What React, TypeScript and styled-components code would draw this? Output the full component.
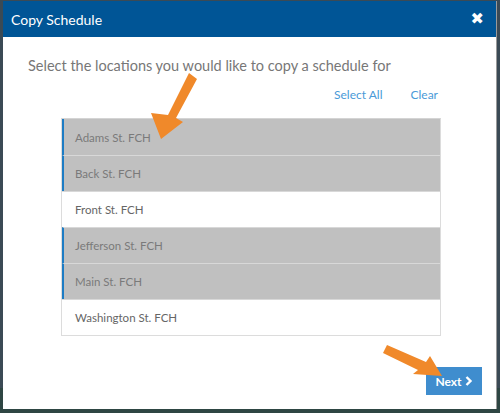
import React, { useState } from 'react'
import styled, { createGlobalStyle } from 'styled-components'

const GlobalStyle = createGlobalStyle`
    html, body {
        margin: 0;
        padding: 0;
        background: #34464a;
    }
    body {
        font-family: Lato, "Open Sans", sans-serif;
    }
`

const Backdrop = styled.div`
    width: 500px;
    height: 413px;
    box-sizing: border-box;
    padding: 1px 3px 4px 3px;
    background: linear-gradient(#3b4a55, #3b4a55 94%, #2e4643 94%);
`

const Modal = styled.div`
    position: relative;
    width: 493px;
    height: 408px;
    background: #ffffff;
    border-right: 1px solid #9a9a9a;
    display: flex;
    flex-direction: column;
`

const Header = styled.div`
    height: 36px;
    background: #005596;
    display: flex;
    align-items: center;
    justify-content: space-between;
    padding: 0 12px 0 8px;
    color: #ffffff;
`

const Title = styled.div`
    font-size: 14px;
`

const CloseButton = styled.span`
    font-size: 16px;
    font-weight: 900;
    line-height: 1;
    font-family: "DejaVu Sans", sans-serif;
`

const Body = styled.div`
    flex: 1;
    display: flex;
    flex-direction: column;
    padding: 20px 14px 14px 25px;
`

const Instruction = styled.div`
    font-size: 14.5px;
    line-height: 18px;
    color: #777777;
`

const LinkRow = styled.div`
    display: flex;
    justify-content: flex-end;
    gap: 28px;
    margin: 12px 44px 0 0;
    line-height: 16px;
`

const Link = styled.a`
    font-size: 12px;
    color: #4a9ad8;
    cursor: pointer;
`

const List = styled.div`
    margin: 15px 0 0 33px;
    width: 378px;
    border: 1px solid #dcdcdc;
    border-top-color: #d4d4d4;
`

const Row = styled.div<{ $selected: boolean }>`
    height: 36px;
    box-sizing: border-box;
    display: flex;
    align-items: center;
    padding-left: ${p => (p.$selected ? 11 : 13)}px;
    font-size: 11.5px;
    color: ${p => (p.$selected ? '#7a7a7a' : '#666666')};
    background: ${p => (p.$selected ? '#c0c0c0' : '#ffffff')};
    border-left: ${p => (p.$selected ? '2px solid #1d7cc4' : 'none')};
    & + & {
        border-top: 1px solid #d8d8d8;
    }
`

const Footer = styled.div`
    margin-top: auto;
    display: flex;
    justify-content: flex-end;
`

const NextButton = styled.button`
    width: 56px;
    height: 28px;
    background: #3f8dce;
    border: none;
    color: #ffffff;
    font-family: Lato, sans-serif;
    font-weight: 700;
    font-size: 12px;
    display: flex;
    align-items: center;
    justify-content: center;
    gap: 3px;
    padding: 0;
`

const Annotation = styled.svg`
    position: absolute;
    left: 0;
    top: 0;
    pointer-events: none;
`

const locations = [
    { name: 'Adams St. FCH', selected: true },
    { name: 'Back St. FCH', selected: true },
    { name: 'Front St. FCH', selected: false },
    { name: 'Jefferson St. FCH', selected: true },
    { name: 'Main St. FCH', selected: true },
    { name: 'Washington St. FCH', selected: false },
]

export default function App(): React.ReactElement {
    const [items, setItems] = useState(locations)

    function toggle(i: number) {
        setItems(items.map((it, idx) => (idx === i ? { ...it, selected: !it.selected } : it)))
    }

    return <>
        <GlobalStyle />
        <Backdrop>
            <Modal>
                <Header>
                    <Title>Copy Schedule</Title>
                    <CloseButton>✖</CloseButton>
                </Header>
                <Body>
                    <Instruction>Select the locations you would like to copy a schedule for</Instruction>
                    <LinkRow>
                        <Link onClick={() => setItems(items.map(it => ({ ...it, selected: true })))}>Select All</Link>
                        <Link onClick={() => setItems(items.map(it => ({ ...it, selected: false })))}>Clear</Link>
                    </LinkRow>
                    <List>
                        {items.map((it, i) => (
                            <Row key={it.name} $selected={it.selected} onClick={() => toggle(i)}>{it.name}</Row>
                        ))}
                    </List>
                    <Footer>
                        <NextButton>
                            Next
                            <svg width="8" height="10" viewBox="0 0 8 10">
                                <path d="M1.5 1 L5.5 5 L1.5 9" stroke="#fff" strokeWidth="2.4" fill="none" />
                            </svg>
                        </NextButton>
                    </Footer>
                </Body>
                <Annotation width="493" height="408" viewBox="3 1 493 408">
                    <g fill="#f0892a">
                        <path d="M189 73 L197 79 L176 118 L183 122 L161 139 L151 113 L168 115 Z" />
                        <path d="M387 345 L383 353 L418 370 L413 374 L442 376 L430 356 L426 362 Z" />
                    </g>
                </Annotation>
            </Modal>
        </Backdrop>
    </>
}
